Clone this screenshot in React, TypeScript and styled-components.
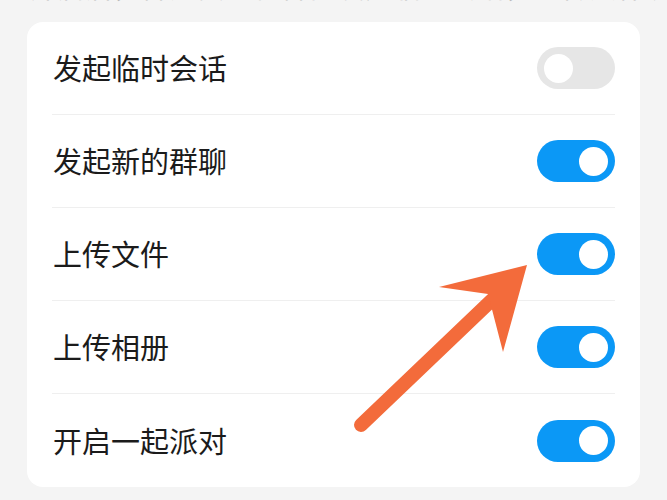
import React from "react";
import styled, { createGlobalStyle } from "styled-components";

const Global = createGlobalStyle`
  html, body { margin: 0; padding: 0; background: #f4f4f4; }
  body { font-family: "Noto Sans CJK SC", "Noto Sans", sans-serif; overflow: hidden; }
`;

const Page = styled.div`
  width: 667px;
  height: 500px;
  background: #f4f4f4;
  padding: 0 27px;
  box-sizing: border-box;
  overflow: hidden;
`;

const Caption = styled.p`
  margin: -28px 0 0 3px;
  height: 30px;
  font-size: 26px;
  line-height: 30px;
  color: #b8b8b8;
  white-space: nowrap;
  letter-spacing: 2px;
`;

const Card = styled.div`
  position: relative;
  margin-top: 20px;
  background: #ffffff;
  border-radius: 16px;
  padding: 0 25px;
`;

const Row = styled.div<{ $last?: boolean }>`
  display: flex;
  align-items: center;
  justify-content: space-between;
  height: 93px;
  box-sizing: border-box;
  border-bottom: ${(p) => (p.$last ? "none" : "1px solid #efefef")};
`;

const Label = styled.span`
  font-size: 29px;
  color: #1b1b1b;
  padding-left: 1px;
  padding-bottom: 2px;
`;

const Track = styled.div<{ $on: boolean }>`
  position: relative;
  width: 78px;
  height: 42px;
  border-radius: 21px;
  background: ${(p) => (p.$on ? "#0b98f6" : "#e6e6e6")};
  flex-shrink: 0;
`;

const Knob = styled.div<{ $on: boolean }>`
  position: absolute;
  top: 6.5px;
  left: ${(p) => (p.$on ? "42px" : "7px")};
  width: 29px;
  height: 29px;
  border-radius: 50%;
  background: #ffffff;
`;

const Arrow = styled.svg`
  position: absolute;
  left: -27px;
  top: -22px;
  width: 667px;
  height: 500px;
  pointer-events: none;
`;

const items = [
  { label: "发起临时会话", on: false },
  { label: "发起新的群聊", on: true },
  { label: "上传文件", on: true },
  { label: "上传相册", on: true },
  { label: "开启一起派对", on: true },
];

export default function App() {
  return (
    <Page>
      <Global />
      <Caption>开启后，群成员可在群内发起临时会话，上传文件及相册等</Caption>
      <Card>
        {items.map((it, i) => (
          <Row key={it.label} $last={i === items.length - 1}>
            <Label>{it.label}</Label>
            <Track $on={it.on}>
              <Knob $on={it.on} />
            </Track>
          </Row>
        ))}
        <Arrow viewBox="0 0 667 500">
          <line x1="361" y1="425" x2="494" y2="298" stroke="#f36b3b" strokeWidth="14" strokeLinecap="round" />
          <polygon points="527,265 439,287 488,294 503,352" fill="#f36b3b" />
        </Arrow>
      </Card>
    </Page>
  );
}
